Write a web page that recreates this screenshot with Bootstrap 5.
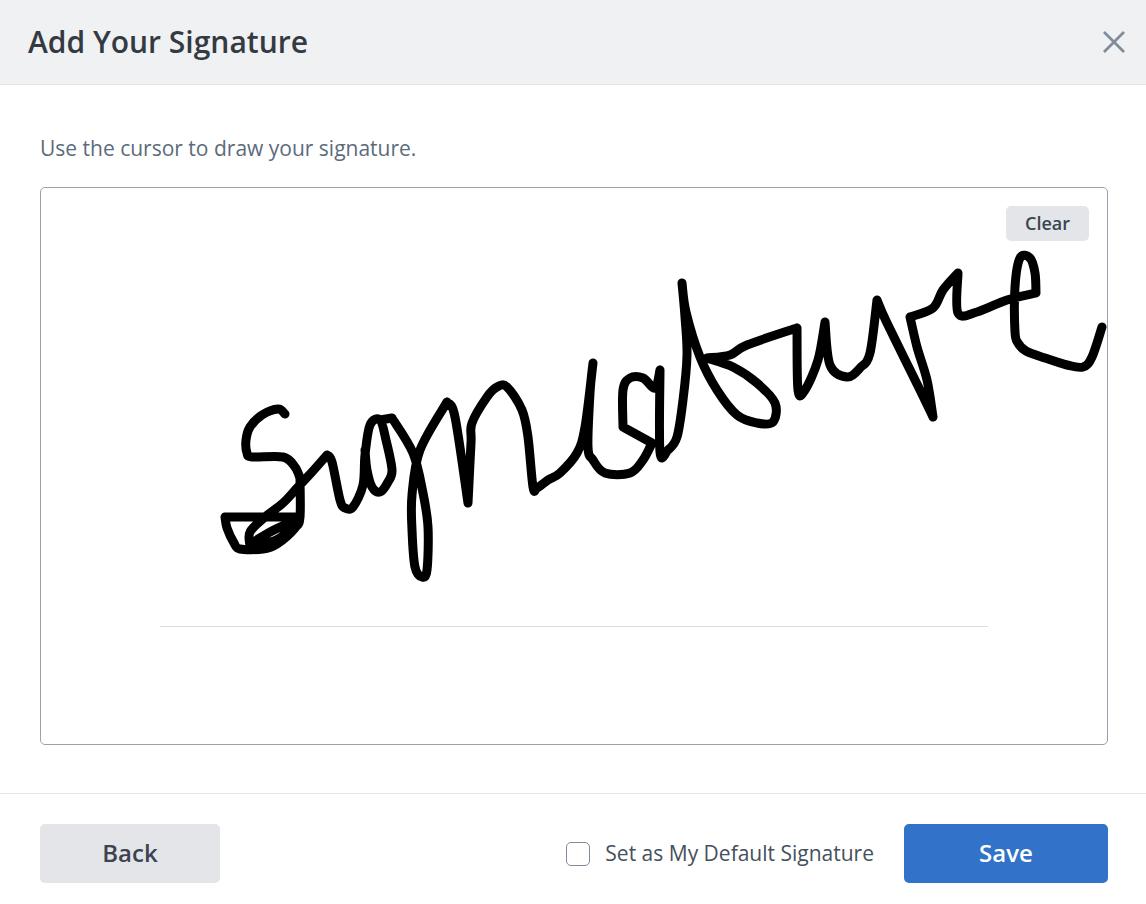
<!DOCTYPE html>
<html lang="en">
<head>
<meta charset="utf-8">
<title>Add Your Signature</title>
<link href="https://cdn.jsdelivr.net/npm/bootstrap@5.3.0/dist/css/bootstrap.min.css" rel="stylesheet">
<style>
html, body { height: 904px; overflow: hidden; }
body { font-family: "Open Sans", sans-serif; color: #343a40; background: #fff; }
.sig-head { height: 85px; padding: 0 20px 0 28px; background: #f0f1f3; border-bottom: 1px solid #e3e5e8; }
.sig-title { font-size: 30px; font-weight: 600; line-height: 1; margin: 0; color: #343a42; }
.sig-close { width: 24px; height: 24px; padding: 0; border: 0; background: transparent; line-height: 0; }
.sig-main { height: 709px; padding: 50px 38px 0 40px; border-bottom: 1px solid #e3e5e8; }
.sig-hint { font-size: 21px; line-height: 27px; margin: 0 0 25px; color: #5c6b7a; }
.sig-pad { height: 558px; border: 1px solid #98a3ae; border-radius: 5px; }
.sig-ink { position: absolute; inset: 0; width: 100%; height: 100%; }
.sig-clear { position: absolute; top: 18px; right: 18px; width: 83px; height: 35px; padding: 0; border: 0; border-radius: 5px; background: #e3e5e9; color: #3b4450; font-size: 18px; font-weight: 600; line-height: 35px; }
.sig-clear:hover { background: #e3e5e9; color: #3b4450; }
.sig-foot { padding: 30px 38px 0 40px; }
.sig-back, .sig-save { height: 59px; padding: 0 0 2px; border: 0; border-radius: 5px; font-size: 24px; font-weight: 600; }
.sig-back { width: 180px; background: #e3e5e9; color: #3b4450; }
.sig-save { width: 204px; background: #3273c9; color: #fff; }
.sig-default { gap: 15px; margin: 0 30px 0 0; }
.sig-default .form-check-input { width: 24px; height: 24px; margin: 0; border: 1px solid #7f8c99; border-radius: 5px; }
.sig-default .form-check-label { font-size: 21px; line-height: 27px; color: #46505c; }
</style>
</head>
<body>
<header class="sig-head d-flex align-items-center justify-content-between">
  <h1 class="sig-title">Add Your Signature</h1>
  <button class="sig-close" type="button" aria-label="Close">
    <svg width="24" height="24" viewBox="0 0 24 24"><path d="M2 2 22 22M22 2 2 22" fill="none" stroke="#7f8c99" stroke-width="2.8"/></svg>
  </button>
</header>
<main class="sig-main">
  <p class="sig-hint">Use the cursor to draw your signature.</p>
  <div class="sig-pad position-relative">
    <svg class="sig-ink" viewBox="41 188 1066 556" aria-hidden="true">
      <line x1="160" y1="626.5" x2="988" y2="626.5" stroke="#dcdcdc" stroke-width="1"/>
      <path id="sigStroke" fill="none" stroke="#000" stroke-width="9" stroke-linecap="round" stroke-linejoin="round"/>
    </svg>
    <button class="btn sig-clear" type="button">Clear</button>
  </div>
</main>
<footer class="sig-foot d-flex align-items-center">
  <button class="btn sig-back" type="button">Back</button>
  <div class="sig-default d-flex align-items-center ms-auto">
    <input class="form-check-input" type="checkbox" id="sigDefault">
    <label class="form-check-label" for="sigDefault">Set as My Default Signature</label>
  </div>
  <button class="btn sig-save" type="button">Save</button>
</footer>
<script src="https://cdn.jsdelivr.net/npm/bootstrap@5.3.0/dist/js/bootstrap.bundle.min.js"></script>
<script>
// Signature strokes: each list is smoothed on its own; lists break at sharp corners.
var strokes = [
 [285,414, 278,409, 262,415, 250,427, 246,440, 247,453, 252,457, 283,457, 295,467, 300,478],
 [300,478, 300,517, 295,528, 277,544, 263,549, 240,549, 234,543, 227,528, 225,517],
 [225,517, 300,517],
 [250,546, 250,532, 265,517, 283,503, 297,488, 312,472, 327,455],
 [327,455, 332,462, 340,500, 345,508, 353,507, 363,485, 365,455, 370,425, 380,420, 386,440, 392,470, 388,482, 380,492, 372,487, 367,470, 365,450],
 [380,420, 392,418],
 [392,418, 413,453, 423,493, 428,527, 427,570, 422,577, 415,567, 412,530, 412,495, 420,450, 447,402],
 [447,402, 455,417, 468,503],
 [468,503, 471,443, 472,423, 487,397, 497,387, 507,387, 522,410, 528,437, 533,487, 537,488, 548,480, 560,473, 577,453, 585,427, 593,363],
 [593,363, 590,393, 588,447, 593,460, 605,473, 630,473, 643,460, 652,443],
 [652,443, 623,427],
 [623,427, 623,390, 630,378, 643,378, 655,388, 660,370],
 [660,370, 660,452, 668,450, 677,437, 683,400, 687,355, 685,317, 682,283],
 [682,283, 686,312, 700,357, 717,390, 737,415, 757,423, 773,422, 775,403, 757,383, 733,367, 707,358],
 [707,358, 730,355, 747,345, 797,328],
 [797,328, 798,390, 805,390, 818,360, 825,322],
 [825,322, 830,365, 847,377, 860,368, 870,353, 877,300],
 [877,300, 887,323, 920,390, 933,417],
 [933,417, 927,380, 917,347, 910,317],
 [910,317, 933,308, 943,290, 958,273],
 [958,273, 958,313, 977,312, 1007,300, 1036,293],
 [1036,293, 1035,273, 1030,258, 1020,258, 1015,287, 1015,332, 1018,343, 1026,351, 1045,358, 1067,365, 1083,367, 1092,357, 1102,327],
 [255,541, 272,531, 285,525, 294,522],
 [252,545, 274,541, 288,532]
];
var d = '';
strokes.forEach(function (s) {
  var p = [];
  for (var i = 0; i < s.length; i += 2) p.push([s[i], s[i + 1]]);
  d += 'M' + p[0][0] + ' ' + p[0][1];
  for (var j = 0; j < p.length - 1; j++) {
    var a = p[j - 1] || p[j], b = p[j], c = p[j + 1], e = p[j + 2] || c;
    d += 'C' + (b[0] + (c[0] - a[0]) / 6).toFixed(1) + ' ' + (b[1] + (c[1] - a[1]) / 6).toFixed(1) + ' ' +
         (c[0] - (e[0] - b[0]) / 6).toFixed(1) + ' ' + (c[1] - (e[1] - b[1]) / 6).toFixed(1) + ' ' + c[0] + ' ' + c[1];
  }
});
document.getElementById('sigStroke').setAttribute('d', d);
</script>
</body>
</html>
